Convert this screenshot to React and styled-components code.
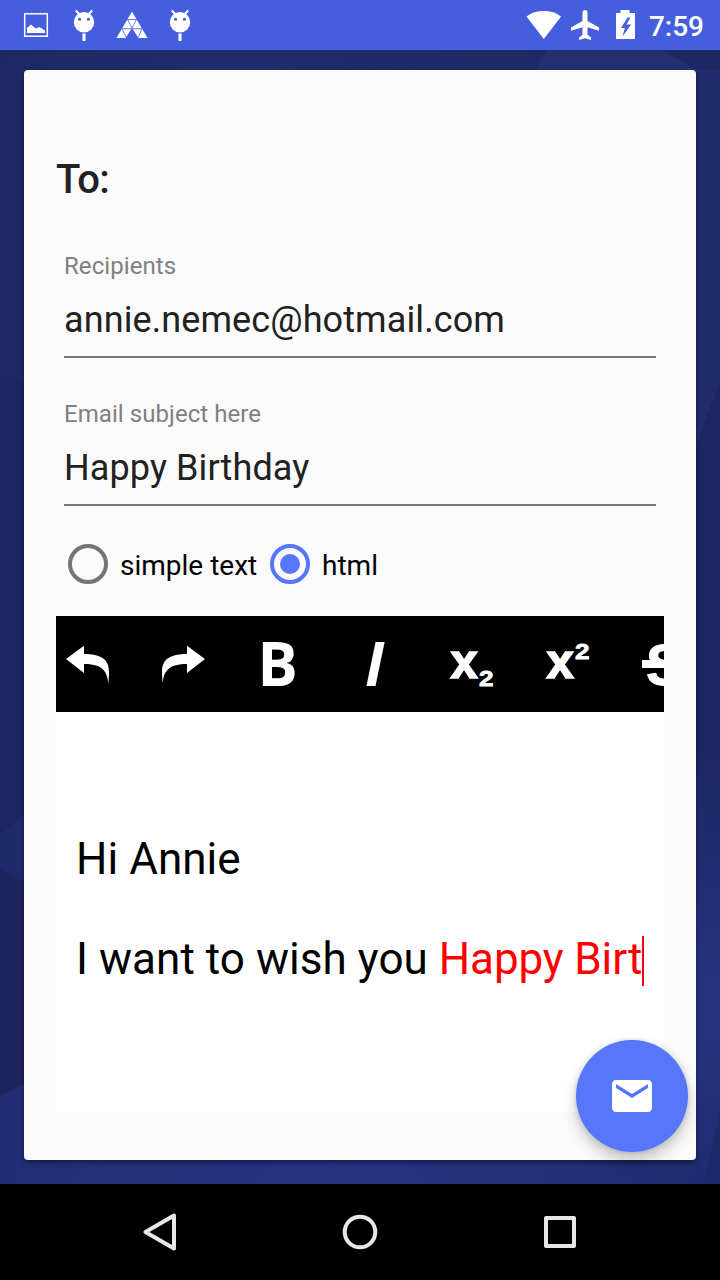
import React, { useState } from "react";
import styled, { createGlobalStyle } from "styled-components";
import { MdEmail } from "react-icons/md";

const GlobalStyle = createGlobalStyle`
  * {
    box-sizing: border-box;
  }

  body {
    margin: 0;
    font-family: Roboto, "Liberation Sans", sans-serif;
    background: #000;
  }
`;

const Screen = styled.div`
  width: 720px;
  height: 1280px;
  display: flex;
  flex-direction: column;
  overflow: hidden;
`;

const StatusBar = styled.header`
  height: 50px;
  flex-shrink: 0;
  display: flex;
  justify-content: space-between;
  background: #455ede;
  color: #fff;

  svg {
    display: block;
  }
`;

const Notifications = styled.div`
  display: flex;
  padding-left: 12px;
`;

const SystemIcons = styled.div`
  display: flex;
  padding-right: 16px;
`;

const Clock = styled.span`
  font-size: 28px;
  font-weight: 500;
  line-height: 53px;
  width: 56px;
  text-align: right;
`;

const Main = styled.main`
  position: relative;
  height: 1134px;
  flex-shrink: 0;
  padding: 20px 24px 24px;
`;

const Wallpaper = styled.svg`
  position: absolute;
  top: 0;
  left: 0;
`;

const Card = styled.section`
  position: relative;
  height: 1090px;
  padding: 85px 32px 48px;
  display: flex;
  flex-direction: column;
  background: #fafafa;
  border-radius: 4px;
  box-shadow: 0 3px 5px rgba(0, 0, 0, 0.4);
`;

const Heading = styled.h1`
  margin: 0;
  height: 50px;
  font-size: 40px;
  line-height: 50px;
  font-weight: 500;
  letter-spacing: -0.5px;
  color: #212121;
`;

const Field = styled.label`
  display: flex;
  flex-direction: column;
  height: 106px;
  margin: ${(props) => props.$top}px 8px 0;
  border-bottom: 2px solid #757575;
`;

const FieldLabel = styled.span`
  font-size: 24px;
  line-height: 28px;
  letter-spacing: 0.07px;
  color: #808080;
`;

const FieldInput = styled.input`
  margin-top: 16px;
  padding: 0;
  height: 48px;
  border: 0;
  outline: 0;
  background: none;
  font-family: inherit;
  font-size: 36px;
  letter-spacing: 0.1px;
  color: #212121;
`;

const RadioRow = styled.div`
  display: flex;
  align-items: center;
  height: 40px;
  margin: 38px 0 32px 12px;
`;

const RadioOption = styled.button`
  display: flex;
  align-items: center;
  width: ${(props) => props.$width}px;
  height: 40px;
  padding: 0;
  gap: 12px;
  border: 0;
  background: none;
  font-family: inherit;
  font-size: 28px;
  line-height: 40px;
  white-space: nowrap;
  color: #000;
`;

const RadioCircle = styled.span`
  display: flex;
  align-items: center;
  justify-content: center;
  width: 40px;
  height: 40px;
  flex-shrink: 0;
  border-radius: 50%;
  border: 4px solid ${(props) => (props.$checked ? "#5677fc" : "#757575")};

  &::after {
    content: "";
    width: 20px;
    height: 20px;
    border-radius: 50%;
    background: ${(props) => (props.$checked ? "#5677fc" : "transparent")};
  }
`;

const RadioText = styled.span`
  padding-top: 3px;
`;

const Toolbar = styled.div`
  display: flex;
  gap: 32px;
  height: 96px;
  flex-shrink: 0;
  overflow: hidden;
  background: #000;
`;

const ToolButton = styled.button`
  flex: 0 0 64px;
  height: 96px;
  padding: 0;
  border: 0;
  background: none;

  svg {
    display: block;
    overflow: visible;
    fill: #fff;
  }
`;

const Editor = styled.div`
  height: 400px;
  padding: 121px 20px 0;
  background: #fff;
  font-size: 44px;
  line-height: 52px;
  color: #000;
  white-space: nowrap;
`;

const Paragraph = styled.p`
  display: flex;
  margin: 0 0 48px;
  letter-spacing: 0.05px;
  white-space: pre;
`;

const RedText = styled.span`
  color: #f00;
  letter-spacing: -0.12px;
`;

const Caret = styled.span`
  flex: 0 0 2px;
  height: 50px;
  margin-top: 3px;
  background: #f00;
`;

const SendButton = styled.button`
  position: absolute;
  right: 8px;
  bottom: 8px;
  width: 112px;
  height: 112px;
  padding: 0;
  display: flex;
  align-items: center;
  justify-content: center;
  border: 0;
  border-radius: 50%;
  background: #5677fc;
  color: #fff;
  box-shadow: 0 8px 14px rgba(0, 0, 0, 0.22), 0 0 5px rgba(0, 0, 0, 0.14);
`;

const NavBar = styled.nav`
  flex: 1;
  display: flex;
  justify-content: center;
  gap: 136px;
  background: #000;

  svg {
    display: block;
    fill: none;
    stroke: #e8e8e8;
    stroke-width: 4;
    stroke-linejoin: round;
  }
`;

const AndroidIcon = () => (
  <svg width="48" height="50" fill="#fff">
    <circle cx="24" cy="22.3" r="10.2" />
    <path d="M15.800 10.500l4.500 4.800M32.200 10.500l-4.500 4.800" stroke="#fff" strokeWidth="2" />
    <circle cx="19.6" cy="19.3" r="1.5" fill="#455ede" />
    <circle cx="28.4" cy="19.3" r="1.5" fill="#455ede" />
    <path d="M22.500 33.500h3v7.500h-3z" />
  </svg>
);

const tools = [
  {
    name: "undo",
    icon: <path d="M10 43L28 29.8V38C44 38 53 42.500 53 56c0 4-.3 8-.8 11.500C51.500 54 45 48 28 48v9z" />,
  },
  {
    name: "redo",
    icon: <path d="M53 43L35 29.8V38C19 38 10 42.500 10 56c0 4 .3 8 .8 11.500C11.500 54 18 48 35 48v9z" />,
  },
  {
    name: "bold",
    icon: (
      <text x="9.500" y="70" fontFamily="Open Sans" fontWeight="700" fontSize="60">B</text>
    ),
  },
  {
    name: "italic",
    icon: (
      <text x="21" y="70" fontFamily="Open Sans" fontStyle="italic" fontWeight="700" fontSize="60">I</text>
    ),
  },
  {
    name: "subscript",
    icon: (
      <g fontFamily="Liberation Sans" fontWeight="700" stroke="#fff">
        <text x="10.500" y="61.5" fontSize="49" strokeWidth="1.6">x</text>
        <text x="39" y="69.5" fontSize="21.500" strokeWidth="0.8" textLength="14.500" lengthAdjust="spacingAndGlyphs">2</text>
      </g>
    ),
  },
  {
    name: "superscript",
    icon: (
      <g fontFamily="Liberation Sans" fontWeight="700" stroke="#fff">
        <text x="10.500" y="61.5" fontSize="49" strokeWidth="1.6">x</text>
        <text x="39" y="43" fontSize="21.500" strokeWidth="0.8" textLength="14.500" lengthAdjust="spacingAndGlyphs">2</text>
      </g>
    ),
  },
  {
    name: "strikethrough",
    icon: (
      <g>
        <text x="14" y="68.500" fontFamily="Liberation Sans" fontWeight="700" fontSize="58" stroke="#fff">S</text>
        <rect x="10" y="44" width="44" height="8" />
      </g>
    ),
  },
];

const App = () => {
  const [recipients, setRecipients] = useState("annie.nemec@hotmail.com");
  const [subject, setSubject] = useState("Happy Birthday");
  const [format, setFormat] = useState("html");

  return (
    <>
      <GlobalStyle />
      <Screen>
        <StatusBar>
          <Notifications>
            <svg width="48" height="50">
              <path d="M12.700 13.700h22.600v22.600H12.700z" fill="none" stroke="#fff" strokeWidth="1.500" />
              <path d="M15 33v-5l4-3.500 4.500 4 4-1.500 5.500 3.500V33z" fill="#fff" />
            </svg>
            <AndroidIcon />
            <svg width="48" height="50">
              <path d="M24 11.500L39.500 38h-9L24 28l-6.500 10h-9z" fill="#fff" />
              <path
                d="M19.500 19.500h9L24 28zM14 28.700h20L30.500 37M14 28.700L18 37"
                fill="none"
                stroke="#455ede"
                strokeWidth="0.8"
              />
            </svg>
            <AndroidIcon />
          </Notifications>
          <SystemIcons>
            <svg width="122" height="50" fill="#fff">
              <path d="M17.800 39L.5 16.500C5.500 12.800 11.500 11 17.800 11s12.300 1.800 17.300 5.500z" />
              <path d="M59 10c-1.700 0-2.500 1.300-2.500 3v8L45 27.500v3.300l11.500-3.500v7.500L53 37.500v2.500l6-1.700 6 1.700v-2.500l-3.500-2.700v-7.500L73 30.800v-3.300L61.500 21v-8c0-1.700-.8-3-2.500-3z" />
              <path d="M90 13h4.500v-3h9v3h5.500v26H90z" />
              <path d="M101.500 17.500l-6.500 10.500h3.800l-2.300 8.500 8.700-12h-4.700l4-7z" fill="#455ede" />
            </svg>
            <Clock>7:59</Clock>
          </SystemIcons>
        </StatusBar>

        <Main>
          <Wallpaper width="720" height="1134" viewBox="0 50 720 1134">
            <defs>
              <linearGradient id="top">
                <stop offset="0" stopColor="#1d2863" />
                <stop offset="0.3" stopColor="#212c6d" />
                <stop offset="0.72" stopColor="#1e2966" />
                <stop offset="1" stopColor="#1d2862" />
              </linearGradient>
              <linearGradient id="bottom">
                <stop offset="0" stopColor="#212e76" />
                <stop offset="0.5" stopColor="#273484" />
                <stop offset="1" stopColor="#202d70" />
              </linearGradient>
              <linearGradient id="right" x1="0" y1="0" x2="0" y2="1">
                <stop offset="0" stopColor="#1c2661" />
                <stop offset="0.6" stopColor="#263483" />
                <stop offset="1" stopColor="#202c70" />
              </linearGradient>
            </defs>
            <rect y="50" width="720" height="1134" fill="#1c2660" />
            <rect y="50" width="720" height="40" fill="url(#top)" />
            <path d="M547 50h115l34 20H535z" fill="#242f70" />
            <path d="M0 70h24v312L0 374z" fill="#1d2865" />
            <path d="M0 835l24-21v69L0 868z" fill="#1f2a6a" />
            <path d="M0 868l24 15v201L0 1096z" fill="#1c255d" />
            <path d="M696 70h24v310l-24 66z" fill="#202c6c" />
            <path d="M0 1096l24-12v70h672v30H0z" fill="url(#bottom)" />
            <path d="M690 752l30-15v447h-30z" fill="url(#right)" />
            <path d="M720 1110v74h-16z" fill="#1e296a" />
          </Wallpaper>

          <Card>
            <Heading>To:</Heading>
            <Field $top={47}>
              <FieldLabel>Recipients</FieldLabel>
              <FieldInput value={recipients} onChange={(e) => setRecipients(e.target.value)} />
            </Field>
            <Field $top={42}>
              <FieldLabel>Email subject here</FieldLabel>
              <FieldInput value={subject} onChange={(e) => setSubject(e.target.value)} />
            </Field>

            <RadioRow>
              <RadioOption $width={202} onClick={() => setFormat("text")}>
                <RadioCircle $checked={format === "text"} />
                <RadioText>simple text</RadioText>
              </RadioOption>
              <RadioOption $width={120} onClick={() => setFormat("html")}>
                <RadioCircle $checked={format === "html"} />
                <RadioText>html</RadioText>
              </RadioOption>
            </RadioRow>

            <Toolbar>
              {tools.map((tool) => (
                <ToolButton key={tool.name} aria-label={tool.name}>
                  <svg width="64" height="96">{tool.icon}</svg>
                </ToolButton>
              ))}
            </Toolbar>
            <Editor>
              <Paragraph>Hi Annie</Paragraph>
              <Paragraph>
                <span>I want to wish you </span>
                <RedText>Happy Birt</RedText>
                <Caret />
              </Paragraph>
            </Editor>

            <SendButton aria-label="send">
              <MdEmail size={48} />
            </SendButton>
          </Card>
        </Main>

        <NavBar>
          <svg width="64" height="96">
            <path d="M46 31.500v33L17.500 48z" />
          </svg>
          <svg width="64" height="96">
            <circle cx="32" cy="48" r="15.300" />
          </svg>
          <svg width="64" height="96">
            <rect x="18" y="34" width="28" height="28" />
          </svg>
        </NavBar>
      </Screen>
    </>
  );
};

export default App;
